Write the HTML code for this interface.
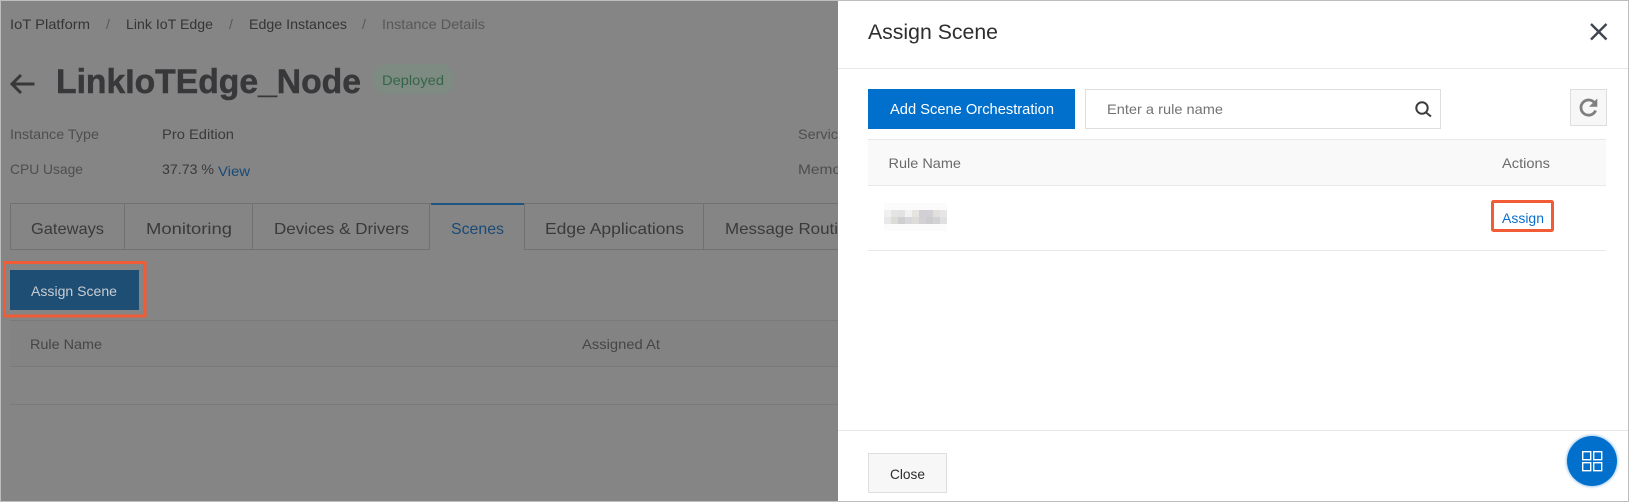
<!DOCTYPE html>
<html lang="en">
<head>
<meta charset="utf-8">
<title>Assign Scene</title>
<style>
html,body{margin:0;padding:0;width:1629px;height:502px;overflow:hidden;background:#858585}
svg{display:block}
text{font-family:"Liberation Sans",sans-serif;font-size:14px}
</style>
</head>
<body>
<svg width="1629" height="502" viewBox="0 0 1629 502" xmlns="http://www.w3.org/2000/svg">
<defs>
<filter id="glow" x="-30%" y="-30%" width="160%" height="160%"><feGaussianBlur stdDeviation="1.2"/></filter>
</defs>
<rect x="0" y="0" width="1629" height="502" fill="#858585"/>

<!-- breadcrumb -->
<g fill="#353535">
<text x="10" y="29" textLength="80" lengthAdjust="spacingAndGlyphs">IoT Platform</text>
<text x="126" y="29" textLength="87" lengthAdjust="spacingAndGlyphs">Link IoT Edge</text>
<text x="249" y="29" textLength="98" lengthAdjust="spacingAndGlyphs">Edge Instances</text>
</g>
<g fill="#585858">
<text x="106" y="29">/</text><text x="229" y="29">/</text><text x="362" y="29">/</text>
<text x="382" y="29" textLength="103" lengthAdjust="spacingAndGlyphs">Instance Details</text>
</g>

<!-- title -->
<path d="M34.5 84H12M21 75L12 84L21 93" fill="none" stroke="#383838" stroke-width="3"/>
<text x="56" y="93" textLength="305" lengthAdjust="spacingAndGlyphs" font-weight="700" style="font-size:34px" fill="#38383b" stroke="#38383b" stroke-width=".5">LinkIoTEdge_Node</text>
<rect x="372" y="64" width="83" height="30" rx="15" fill="#7e8b82"/>
<text x="382" y="85" textLength="62" lengthAdjust="spacingAndGlyphs" fill="#356548">Deployed</text>

<!-- info -->
<g fill="#4e4e4e">
<text x="10" y="139" textLength="89" lengthAdjust="spacingAndGlyphs">Instance Type</text>
<text x="10" y="174" textLength="73" lengthAdjust="spacingAndGlyphs">CPU Usage</text>
<text x="798" y="139" textLength="48" lengthAdjust="spacingAndGlyphs">Service</text>
<text x="798" y="174" textLength="56" lengthAdjust="spacingAndGlyphs">Memory</text>
</g>
<g fill="#3a3a3a">
<text x="162" y="139" textLength="72" lengthAdjust="spacingAndGlyphs">Pro Edition</text>
<text x="162" y="174" textLength="52" lengthAdjust="spacingAndGlyphs">37.73 %</text>
</g>
<text x="218" y="176" textLength="32" lengthAdjust="spacingAndGlyphs" fill="#184a76">View</text>

<!-- tabs -->
<g fill="none" stroke="#717171" stroke-width="1">
<path d="M10.5 203.5H431M10.5 203.5V249.5H430M124.5 204V249M252.5 204V249M429.5 204V249"/>
<path d="M524.5 203.5V249.5H838M524.5 203.5H838M703.5 204V249"/>
</g>
<rect x="431" y="203" width="93" height="2" fill="#1f5582"/>
<g fill="#3a3a3a">
<text x="31" y="234" textLength="73" lengthAdjust="spacingAndGlyphs" style="font-size:16px">Gateways</text>
<text x="146" y="234" textLength="86" lengthAdjust="spacingAndGlyphs" style="font-size:16px">Monitoring</text>
<text x="274" y="234" textLength="135" lengthAdjust="spacingAndGlyphs" style="font-size:16px">Devices &amp; Drivers</text>
<text x="451" y="234" textLength="53" lengthAdjust="spacingAndGlyphs" style="font-size:16px" fill="#1a4a76">Scenes</text>
<text x="545" y="234" textLength="139" lengthAdjust="spacingAndGlyphs" style="font-size:16px">Edge Applications</text>
<text x="725" y="234" textLength="113" lengthAdjust="spacingAndGlyphs" style="font-size:16px">Message Routi</text>
</g>

<!-- left button -->
<rect x="10" y="270" width="129" height="40" fill="#1f4e75"/>
<text x="31" y="296" textLength="86" lengthAdjust="spacingAndGlyphs" fill="#c8cdd2">Assign Scene</text>
<rect x="4.5" y="262.5" width="140.5" height="53.5" fill="none" stroke="#f15b35" stroke-width="3"/>

<!-- left table -->
<rect x="10" y="320" width="828" height="47" fill="#838383"/>
<path d="M10 320.5H838M10 366.5H838M10 404.5H838" stroke="#7a7a7a" stroke-width="1"/>
<g fill="#464646">
<text x="30" y="349" textLength="72" lengthAdjust="spacingAndGlyphs">Rule Name</text>
<text x="582" y="349" textLength="78" lengthAdjust="spacingAndGlyphs">Assigned At</text>
</g>

<!-- drawer -->
<rect x="838" y="0" width="791" height="502" fill="#ffffff"/>
<rect x="838" y="68" width="791" height="1" fill="#e8e8e8"/>
<text x="868" y="39" textLength="130" lengthAdjust="spacingAndGlyphs" style="font-size:21px" fill="#2e2e2e">Assign Scene</text>
<path d="M1591 24L1606.5 39.5M1606.5 24L1591 39.5" stroke="#3f4650" stroke-width="2.4" fill="none"/>

<rect x="868" y="89" width="207" height="40" fill="#0070cc"/>
<text x="890" y="114" textLength="164" lengthAdjust="spacingAndGlyphs" style="font-size:15px" fill="#fff">Add Scene Orchestration</text>
<rect x="1085.5" y="89.5" width="355" height="39" fill="#fff" stroke="#dedede"/>
<text x="1107" y="114" textLength="116" lengthAdjust="spacingAndGlyphs" fill="#737373">Enter a rule name</text>
<circle cx="1422" cy="108" r="5.7" fill="none" stroke="#3c3c3c" stroke-width="2"/>
<path d="M1426 112.5L1431 116.5" stroke="#3c3c3c" stroke-width="2"/>

<rect x="1570.5" y="89.5" width="36" height="36" fill="#f7f7f7" stroke="#dedede"/>
<path d="M1595 103.5A7.6 7.6 0 1 0 1595.6 110.5" fill="none" stroke="#7f7f7f" stroke-width="2.8"/>
<path d="M1589 106.8L1597.3 106.8L1597.3 98.5Z" fill="#7f7f7f"/>

<rect x="868" y="139" width="738" height="46" fill="#f9f9f9"/>
<path d="M868 139.5H1606M868 185.5H1606M868 250.5H1606" stroke="#e8e8e8" stroke-width="1"/>
<g fill="#6a6a6a">
<text x="888.5" y="168" textLength="72.5" lengthAdjust="spacingAndGlyphs">Rule Name</text>
<text x="1502" y="168" textLength="48" lengthAdjust="spacingAndGlyphs">Actions</text>
</g>

<!-- blurred text -->
<g>
<rect x="884" y="203" width="63" height="28" fill="#fbfbfb"/>
<rect x="884" y="210" width="7" height="7" fill="#f0f0f0"/><rect x="891" y="210" width="7" height="7" fill="#e4e4e4"/><rect x="898" y="210" width="7" height="7" fill="#e2e2e2"/><rect x="905" y="210" width="7" height="7" fill="#f2f2f5"/><rect x="912" y="210" width="7" height="7" fill="#e6e4e0"/><rect x="919" y="210" width="7" height="7" fill="#d2d0d4"/><rect x="926" y="210" width="7" height="7" fill="#d2d0d4"/><rect x="933" y="210" width="7" height="7" fill="#e2e0dc"/><rect x="940" y="210" width="7" height="7" fill="#e6e6e8"/>
<rect x="884" y="217" width="7" height="7" fill="#e8e8e8"/><rect x="891" y="217" width="7" height="7" fill="#dcdcd6"/><rect x="898" y="217" width="7" height="7" fill="#cfcfd2"/><rect x="905" y="217" width="7" height="7" fill="#d8d8dc"/><rect x="912" y="217" width="7" height="7" fill="#dedcd8"/><rect x="919" y="217" width="7" height="7" fill="#d2d2d6"/><rect x="926" y="217" width="7" height="7" fill="#cccccf"/><rect x="933" y="217" width="7" height="7" fill="#d2d2d4"/><rect x="940" y="217" width="7" height="7" fill="#e0e0e2"/>
</g>

<text x="1502" y="223" textLength="42" lengthAdjust="spacingAndGlyphs" fill="#0a6fd0">Assign</text>
<rect x="1492.5" y="201.5" width="60" height="29" rx="1" fill="none" stroke="#f15b35" stroke-width="3"/>

<rect x="838" y="430" width="791" height="1" fill="#e8e8e8"/>
<rect x="868.5" y="453.5" width="78" height="39" fill="#f7f7f7" stroke="#dedede"/>
<text x="890" y="479" textLength="35" lengthAdjust="spacingAndGlyphs" fill="#2e2e2e">Close</text>

<circle cx="1592" cy="461" r="26" fill="#0070cc" opacity=".35" filter="url(#glow)"/>
<circle cx="1592" cy="461" r="25" fill="#0070cc"/>
<g fill="none" stroke="#fff" stroke-width="1.4">
<rect x="1582.7" y="451.7" width="8" height="8"/><rect x="1593.7" y="451.7" width="8" height="8"/>
<rect x="1582.7" y="462.7" width="8" height="8"/><rect x="1593.7" y="462.7" width="8" height="8"/>
</g>

<!-- outer screenshot border -->
<rect x="0.5" y="0.5" width="1628" height="501" fill="none" stroke="#bdbdbd"/>
</svg>
</body>
</html>
